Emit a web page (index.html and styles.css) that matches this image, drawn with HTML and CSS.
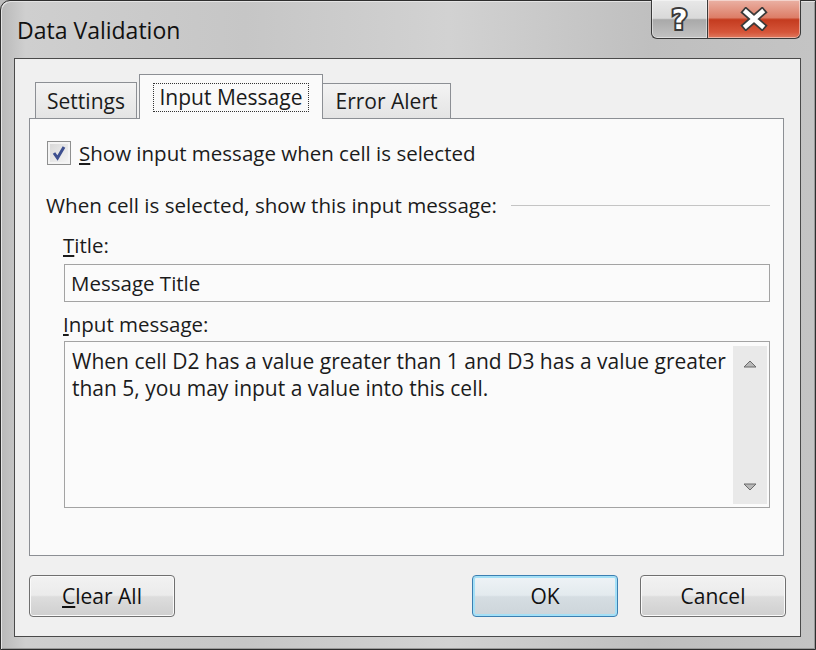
FILE: index.html
```html
<!DOCTYPE html>
<html lang="en">
<head>
    <meta charset="UTF-8">
    <title>Data Validation</title>
    <link rel="stylesheet" href="styles.css">
</head>
<body>
    <div class="window">
        <div class="titlebar">
            <span class="title">Data Validation</span>
            <div class="caption-btns">
                <div class="cap-btn help">?</div>
                <div class="cap-btn close">
                    <svg width="30" height="24" viewBox="0 0 30 24">
                        <path d="M7 5 L23 19 M23 5 L7 19" stroke="#3a3a3a" stroke-width="8" stroke-linecap="square"/>
                        <path d="M7 5 L23 19 M23 5 L7 19" stroke="#fff" stroke-width="4.5" stroke-linecap="square"/>
                    </svg>
                </div>
            </div>
        </div>

        <div class="client">
            <div class="tabs">
                <div class="tab">Settings</div>
                <div class="tab active"><span class="focus">Input Message</span></div>
                <div class="tab last">Error Alert</div>
            </div>

            <div class="panel">
                <div class="check-row">
                    <span class="checkbox">
                        <svg width="22" height="22" viewBox="0 0 22 22">
                            <path d="M6 11 L9.5 16 L16 5" fill="none" stroke="#3d4f8f" stroke-width="3"/>
                        </svg>
                    </span>
                    <span><u>S</u>how input message when cell is selected</span>
                </div>

                <div class="group-head">
                    <span>When cell is selected, show this input message:</span>
                    <span class="rule"></span>
                </div>

                <div class="field-label"><u>T</u>itle:</div>
                <div class="textbox">Message Title</div>

                <div class="field-label"><u>I</u>nput message:</div>
                <div class="memo">
                    <div class="memo-text">When cell D2 has a value greater than 1 and D3 has a value greater than 5, you may input a value into this cell.</div>
                    <div class="scrollbar">
                        <svg width="14" height="10" viewBox="0 0 14 10"><path d="M1 8 L7 2 L13 8 Z" fill="#b8b8b8" stroke="#6a6a6a" stroke-width="1"/></svg>
                        <svg width="14" height="10" viewBox="0 0 14 10"><path d="M1 2 L7 8 L13 2 Z" fill="#b8b8b8" stroke="#6a6a6a" stroke-width="1"/></svg>
                    </div>
                </div>
            </div>

            <div class="buttons">
                <button class="btn"><u>C</u>lear All</button>
                <div class="spacer"></div>
                <button class="btn default">OK</button>
                <button class="btn">Cancel</button>
            </div>
        </div>
    </div>
</body>
</html>
```

FILE: styles.css
```css
body {
    margin: 0;
    padding: 0;
    overflow: hidden;
    background-color: #bdbdbd;
    font-family: 'Open Sans', 'Noto Sans', sans-serif;
    color: #1b1b1b;
}
.window {
    box-sizing: border-box;
    width: 816px;
    height: 650px;
    border: 1px solid #2e2e2e;
    border-top-left-radius: 10px;
    padding: 0 14px 12px 13px;
    background: linear-gradient(90deg, #b9b9b9 0%, #cfcfcf 3%, #c6c6c6 30%, #d2d2d2 55%, #bfbfbf 80%, #c4c4c4 100%);
    box-shadow: inset 1px 1px 0 #e4e4e4, inset -1px -1px 0 #9a9a9a;
}
.titlebar {
    height: 57px;
    display: flex;
    justify-content: space-between;
    align-items: flex-start;
}
.title {
    font-size: 23px;
    margin: 13px 0 0 3px;
    color: #111;
}
.caption-btns {
    display: flex;
    margin-top: -1px;
}
.cap-btn {
    height: 39px;
    box-sizing: border-box;
    border: 1px solid #3a3a3a;
    border-top: none;
    display: flex;
    align-items: center;
    justify-content: center;
    box-shadow: inset 0 0 0 1px rgba(255, 255, 255, 0.45);
}
.help {
    width: 56px;
    border-bottom-left-radius: 6px;
    border-right: none;
    background: linear-gradient(#e8e8e8 0%, #d9d9d9 48%, #a9a9a9 52%, #c3c3c3 100%);
    font-family: 'DejaVu Sans', sans-serif;
    font-weight: bold;
    font-size: 27px;
    color: #fff;
    -webkit-text-stroke: 4px #3a3a3a;
    paint-order: stroke fill;
}
.close {
    width: 94px;
    border-bottom-right-radius: 6px;
    background: linear-gradient(#eab1a4 0%, #dd7e68 46%, #c43b1f 52%, #d6563a 85%, #e07a5f 100%);
}
.client {
    box-sizing: border-box;
    height: 579px;
    border: 1px solid #4a4a4a;
    background-color: #f0f0f0;
    padding: 15px 16px 19px 14px;
    display: flex;
    flex-direction: column;
}
.tabs {
    display: flex;
    align-items: flex-end;
    margin-left: 6px;
    position: relative;
    z-index: 1;
}
.tab {
    box-sizing: border-box;
    height: 36px;
    border: 1px solid #8c8f94;
    border-bottom: none;
    background: linear-gradient(#f3f3f3, #e4e4e4);
    font-size: 21px;
    display: flex;
    align-items: center;
    justify-content: center;
    width: 102px;
}
.tab.active {
    width: 184px;
    height: 45px;
    margin: 0 0 -1px 2px;
    background: #fafafa;
}
.tab.last {
    width: 129px;
    height: 35px;
    margin-left: -1px;
}
.focus {
    border: 1px dotted #333;
    padding: 0 6px;
    line-height: 27px;
}
.panel {
    box-sizing: border-box;
    height: 440px;
    border: 1px solid #8c8f94;
    background-color: #fafafa;
    padding: 22px 13px 0 17px;
}
.check-row {
    display: flex;
    align-items: center;
    gap: 8px;
    font-size: 20.5px;
    line-height: 24px;
}
.checkbox {
    box-sizing: border-box;
    width: 24px;
    height: 24px;
    border: 1px solid #8e8f8f;
    background: linear-gradient(135deg, #d6d6d6, #f6f6f6);
    box-shadow: inset 0 0 0 2px #f4f4f4;
    display: flex;
    align-items: center;
    justify-content: center;
}
.group-head {
    display: flex;
    align-items: center;
    margin: 28px 0 0 -1px;
    font-size: 20.6px;
    line-height: 24px;
}
.rule {
    flex: 1;
    height: 1px;
    margin-left: 14px;
    background-color: #c4c4c4;
}
.field-label {
    margin: 16px 0 0 16px;
    font-size: 20.5px;
    line-height: 24px;
}
.field-label + .textbox {
    margin-top: 7px;
}
.textbox {
    box-sizing: border-box;
    height: 38px;
    margin-left: 17px;
    border: 1px solid #a3a3a3;
    background-color: #fbfbfb;
    padding-left: 6px;
    font-size: 20.5px;
    line-height: 36px;
}
.textbox + .field-label {
    margin-top: 10px;
}
.memo {
    box-sizing: border-box;
    height: 167px;
    margin: 5px 0 0 17px;
    border: 1px solid #a3a3a3;
    background-color: #fbfbfb;
    display: flex;
}
.memo-text {
    flex: 1;
    padding: 6px 4px 0 7px;
    font-size: 21px;
    line-height: 27px;
}
.scrollbar {
    width: 34px;
    margin: 4px 2px 3px 0;
    background-color: #e9e9e9;
    display: flex;
    flex-direction: column;
    justify-content: space-between;
    align-items: center;
    padding: 13px 0 12px;
    box-sizing: border-box;
}
.buttons {
    display: flex;
    gap: 22px;
    margin-top: 19px;
    margin-right: -2px;
}
.spacer {
    flex: 1;
}
.btn {
    width: 146px;
    height: 42px;
    border: 1px solid #707070;
    border-radius: 4px;
    background: linear-gradient(#f2f2f2 0%, #ebebeb 48%, #dddddd 52%, #cfcfcf 100%);
    box-shadow: inset 0 0 0 1px #fafafa;
    font-family: 'Open Sans', sans-serif;
    font-size: 21px;
    color: #111;
    padding: 0;
}
.btn.default {
    border-color: #3c7fb1;
    box-shadow: inset 0 0 0 2px #a4e0f7;
    background: linear-gradient(#eef3f6 0%, #e3eaee 48%, #d5dde2 52%, #cdd5da 100%);
}
```
